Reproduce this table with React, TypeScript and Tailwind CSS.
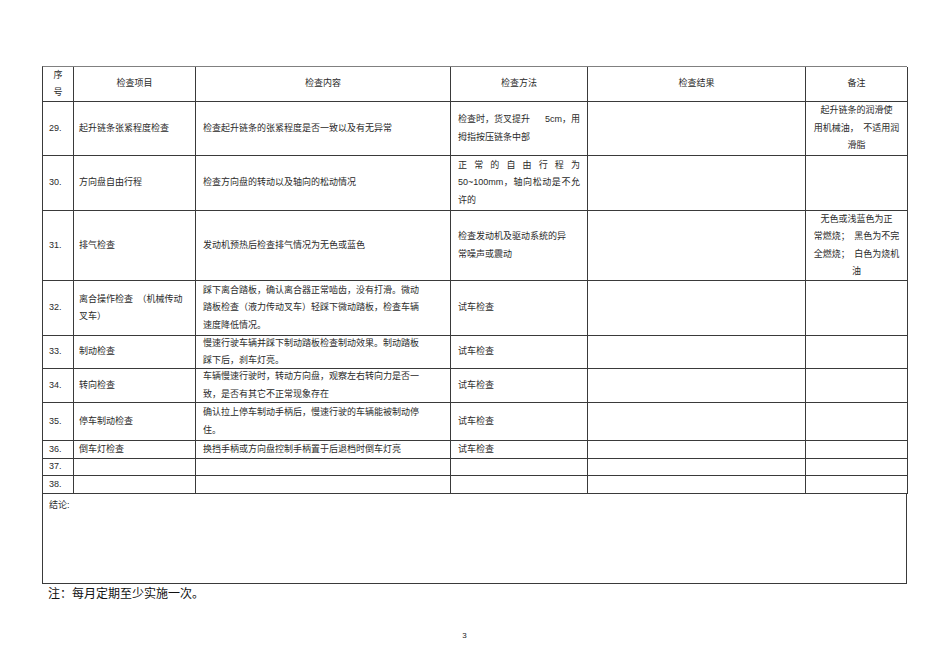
import React from 'react'

type Row = {
  no: string
  item?: string[]
  content?: string[]
  method?: React.ReactNode
  remark?: string[]
}

const spread = (s: string) => (
  <div className="flex justify-between">
    {s.split('').map((c, i) => (
      <span key={i}>{c}</span>
    ))}
  </div>
)

const rows: Row[] = [
  {
    no: '29.',
    item: ['起升链条张紧程度检查'],
    content: ['检查起升链条的张紧程度是否一致以及有无异常'],
    method: (
      <>
        <div className="flex justify-between">
          <span>检查时，货叉提升</span>
          <span>5cm，用</span>
        </div>
        <div>拇指按压链条中部</div>
      </>
    ),
    remark: ['起升链条的润滑使', '用机械油，　不适用润', '滑脂'],
  },
  {
    no: '30.',
    item: ['方向盘自由行程'],
    content: ['检查方向盘的转动以及轴向的松动情况'],
    method: (
      <>
        {spread('正常的自由行程为')}
        <div className="[text-align-last:justify] text-justify">50~100mm，轴向松动是不允</div>
        <div>许的</div>
      </>
    ),
  },
  {
    no: '31.',
    item: ['排气检查'],
    content: ['发动机预热后检查排气情况为无色或蓝色'],
    method: (
      <>
        <div>检查发动机及驱动系统的异</div>
        <div>常噪声或震动</div>
      </>
    ),
    remark: ['无色或浅蓝色为正', '常燃烧；　黑色为不完', '全燃烧；　白色为烧机', '油'],
  },
  {
    no: '32.',
    item: ['离合操作检查　（机械传动', '叉车）'],
    content: ['踩下离合踏板，确认离合器正常啮齿，没有打滑。微动', '踏板检查（液力传动叉车）轻踩下微动踏板，检查车辆', '速度降低情况。'],
    method: <div>试车检查</div>,
  },
  {
    no: '33.',
    item: ['制动检查'],
    content: ['慢速行驶车辆并踩下制动踏板检查制动效果。制动踏板', '踩下后，刹车灯亮。'],
    method: <div>试车检查</div>,
  },
  {
    no: '34.',
    item: ['转向检查'],
    content: ['车辆慢速行驶时，转动方向盘，观察左右转向力是否一', '致，是否有其它不正常现象存在'],
    method: <div>试车检查</div>,
  },
  {
    no: '35.',
    item: ['停车制动检查'],
    content: ['确认拉上停车制动手柄后，慢速行驶的车辆能被制动停', '住。'],
    method: <div>试车检查</div>,
  },
  {
    no: '36.',
    item: ['倒车灯检查'],
    content: ['换挡手柄或方向盘控制手柄置于后退档时倒车灯亮'],
    method: <div>试车检查</div>,
  },
  { no: '37.' },
  { no: '38.' },
]

const cell = 'border-r border-b border-[#3a3a3a] flex flex-col justify-center leading-[17.5px] min-h-0'

export default function App() {
  return (
    <div className="w-[950px] h-[672px] bg-white pt-[66px] pl-[42px] text-[9px] text-[#2a2a2a] font-['Liberation_Sans','Noto_Sans_CJK_SC',sans-serif]">
      <div className="w-[865px]">
        <div className="grid grid-cols-[31px_122px_255px_137px_218px_102px] grid-rows-[35px_54px_55px_70px_55px_33px_34px_38px_18px_17px_18px] border-l border-t border-[#3a3a3a] border-t-[#808080]">
          {/* header */}
          <div className={`${cell} items-center`}>
            <div>序</div>
            <div>号</div>
          </div>
          <div className={`${cell} items-center`}>检查项目</div>
          <div className={`${cell} items-center`}>检查内容</div>
          <div className={`${cell} items-center`}>检查方法</div>
          <div className={`${cell} items-center`}>检查结果</div>
          <div className={`${cell} items-center`}>备注</div>

          {rows.map(r => (
            <React.Fragment key={r.no}>
              <div className={`${cell} pl-[6px]`}>{r.no}</div>
              <div className={`${cell} pl-[5px]`}>
                {r.item?.map((l, i) => <div key={i}>{l}</div>)}
              </div>
              <div className={`${cell} pl-[7px]`}>
                {r.content?.map((l, i) => <div key={i}>{l}</div>)}
              </div>
              <div className={`${cell} pl-[7px] pr-[7px]`}>{r.method}</div>
              <div className={cell} />
              <div className={`${cell} items-center`}>
                {r.remark?.map((l, i) => <div key={i}>{l}</div>)}
              </div>
            </React.Fragment>
          ))}
        </div>

        <div className="h-[90px] border-l border-r border-b border-[#3a3a3a] pl-[6px] pt-[5px] leading-[12px]">
          结论:
        </div>

        <div className="pl-[6px] text-[12px] leading-[20px] text-[#111]">注：每月定期至少实施一次。</div>
        <div className="mt-[26px] text-center text-[8px] pr-[20px] text-[#222]">3</div>
      </div>
    </div>
  )
}
